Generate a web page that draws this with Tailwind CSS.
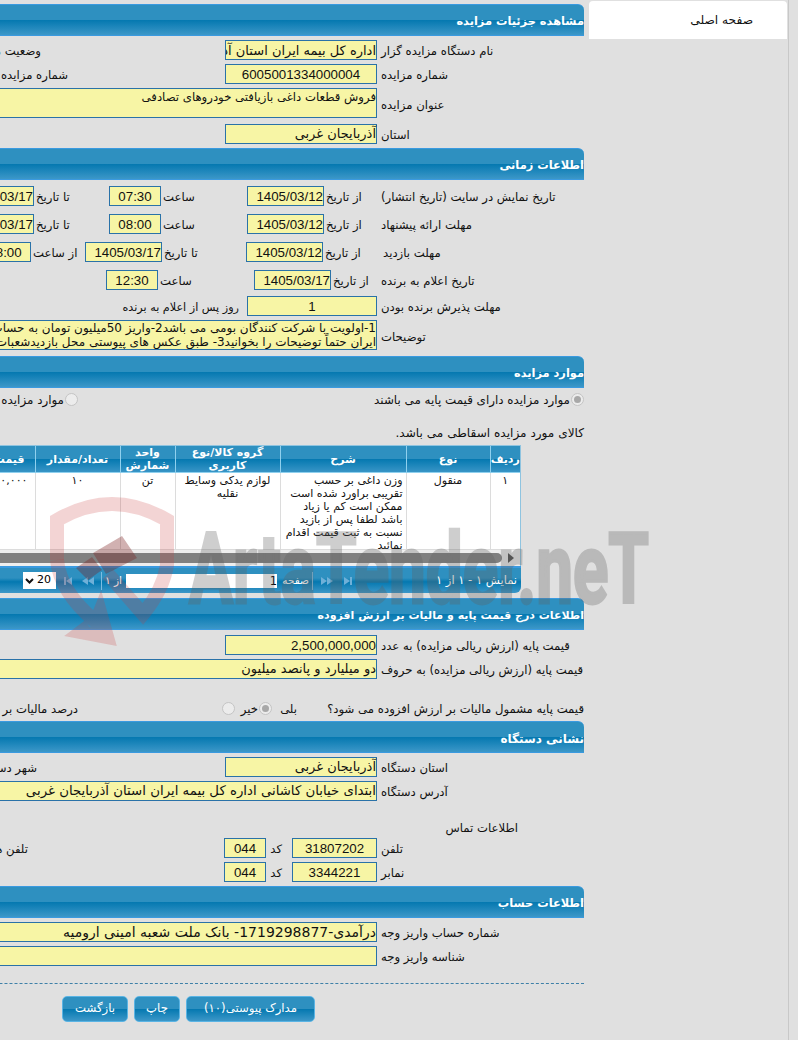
<!DOCTYPE html>
<html lang="fa" dir="rtl">
<head>
<meta charset="UTF-8">
<title>مشاهده جزئیات مزایده</title>
<script src="https://cdn.jsdelivr.net/npm/@tailwindcss/browser@4"></script>
</head>
<body class="relative h-[1040px] overflow-hidden bg-[#e0e0e0] text-[#111] text-[11.7px] font-['DejaVu_Sans',sans-serif]">

<div class="flex h-[1040px] mr-[9px] border-r border-[#c8c8c8] pr-px">
  <!-- Sidebar -->
  <aside class="w-[198px] flex-none pt-px">
    <div class="h-[38px] bg-white rounded-t-[4px] flex items-center pr-[34px] text-[12.2px]">صفحه اصلی</div>
  </aside>

  <!-- Main -->
  <main class="w-[760px] flex-none mr-[5px] pt-1">

    <h2 class="h-8 pt-1 flex items-center border-y border-[#3a9ae0] rounded-tr-[6px] bg-[linear-gradient(to_bottom,#2e90c0_0%,#2e90c0_50%,#0478b0_50%,#3c97c8_100%)] text-white font-bold text-[11.4px]">مشاهده جزئیات مزایده</h2>
    <div class="flex items-center h-5 mt-1">
      <div class="w-[207px] flex-none text-left pl-1 pt-1">نام دستگاه مزایده گزار</div>
      <div class="w-[152px] h-5 flex-none border border-[#2a72a8] bg-[#f7f5a5] text-[13px] leading-[20px] overflow-hidden whitespace-nowrap">اداره کل بیمه ایران استان آذربایجان غربی</div>
      <div class="pr-[184px] pt-1 whitespace-nowrap">وضعیت مزایده</div>
    </div>
    <div class="flex items-center h-5 mt-1">
      <div class="w-[207px] flex-none text-left pl-1 pt-1">شماره مزایده</div>
      <div dir="ltr" class="w-[152px] h-5 flex-none border border-[#2a72a8] bg-[#f7f5a5] font-['Liberation_Sans',sans-serif] text-[13.3px] leading-[20px] text-center">6005001334000004</div>
      <div class="pr-[157px] pt-1 whitespace-nowrap">شماره مزایده</div>
    </div>
    <div class="flex items-center h-[30px] mt-1">
      <div class="w-[207px] flex-none text-left pl-1 pt-[6px]">عنوان مزایده</div>
      <div class="flex-1 h-[30px] border border-[#2a72a8] bg-[#f7f5a5] leading-[16px] whitespace-nowrap">فروش قطعات داغی بازیافتی خودروهای تصادفی</div>
    </div>
    <div class="flex items-center h-5 mt-[6px]">
      <div class="w-[207px] flex-none text-left pl-1 pt-1">استان</div>
      <div class="w-[152px] h-5 flex-none border border-[#2a72a8] bg-[#f7f5a5] text-[13px] leading-[18px] whitespace-nowrap">آذربایجان غربی</div>
    </div>

    <h2 class="h-8 pt-1 mt-1 flex items-center border-y border-[#3a9ae0] rounded-tr-[6px] bg-[linear-gradient(to_bottom,#2e90c0_0%,#2e90c0_50%,#0478b0_50%,#3c97c8_100%)] text-white font-bold text-[11.4px]">اطلاعات زمانی</h2>
    <div class="flex items-center h-5 mt-[6px]">
      <div class="w-[207px] flex-none text-left pl-1 pt-1 whitespace-nowrap">تاریخ نمایش در سایت (تاریخ انتشار)</div>
      <div class="w-[53px] flex-none text-left pl-[2px] pt-1 whitespace-nowrap">از تاریخ</div>
      <div dir="ltr" class="w-[77px] h-5 flex-none border border-[#2a72a8] bg-[#f7f5a5] font-['Liberation_Sans',sans-serif] text-[13.3px] leading-[20px] text-right">1405/03/12</div>
      <div class="w-[86px] flex-none text-left pl-[2px] pt-1">ساعت</div>
      <div dir="ltr" class="w-[52px] h-5 flex-none border border-[#2a72a8] bg-[#f7f5a5] font-['Liberation_Sans',sans-serif] text-[13.3px] leading-[20px] text-center">07:30</div>
      <div class="w-[75px] flex-none text-left pl-[2px] pt-1 whitespace-nowrap">تا تاریخ</div>
      <div dir="ltr" class="w-[77px] h-5 flex-none border border-[#2a72a8] bg-[#f7f5a5] font-['Liberation_Sans',sans-serif] text-[13.3px] leading-[20px] text-right">1405/03/17</div>
    </div>
    <div class="flex items-center h-5 mt-2">
      <div class="w-[207px] flex-none text-left pl-1 pt-1 whitespace-nowrap">مهلت ارائه پیشنهاد</div>
      <div class="w-[53px] flex-none text-left pl-[2px] pt-1 whitespace-nowrap">از تاریخ</div>
      <div dir="ltr" class="w-[77px] h-5 flex-none border border-[#2a72a8] bg-[#f7f5a5] font-['Liberation_Sans',sans-serif] text-[13.3px] leading-[20px] text-right">1405/03/12</div>
      <div class="w-[86px] flex-none text-left pl-[2px] pt-1">ساعت</div>
      <div dir="ltr" class="w-[52px] h-5 flex-none border border-[#2a72a8] bg-[#f7f5a5] font-['Liberation_Sans',sans-serif] text-[13.3px] leading-[20px] text-center">08:00</div>
      <div class="w-[75px] flex-none text-left pl-[2px] pt-1 whitespace-nowrap">تا تاریخ</div>
      <div dir="ltr" class="w-[77px] h-5 flex-none border border-[#2a72a8] bg-[#f7f5a5] font-['Liberation_Sans',sans-serif] text-[13.3px] leading-[20px] text-right">1405/03/17</div>
    </div>
    <div class="flex items-center h-5 mt-2">
      <div class="w-[207px] flex-none text-left pl-[6px] pt-1 whitespace-nowrap">مهلت بازدید</div>
      <div class="w-[54px] flex-none text-left pl-[2px] pt-1 whitespace-nowrap">از تاریخ</div>
      <div dir="ltr" class="w-[77px] h-5 flex-none border border-[#2a72a8] bg-[#f7f5a5] font-['Liberation_Sans',sans-serif] text-[13.3px] leading-[20px] text-right">1405/03/12</div>
      <div class="w-[84px] flex-none text-left pl-[2px] pt-1 whitespace-nowrap">تا تاریخ</div>
      <div dir="ltr" class="w-[77px] h-5 flex-none border border-[#2a72a8] bg-[#f7f5a5] font-['Liberation_Sans',sans-serif] text-[13.3px] leading-[20px] text-right">1405/03/17</div>
      <div class="w-[54px] flex-none text-left pl-[2px] pt-1 whitespace-nowrap">از ساعت</div>
      <div dir="ltr" class="w-[52px] h-5 flex-none border border-[#2a72a8] bg-[#f7f5a5] font-['Liberation_Sans',sans-serif] text-[13.3px] leading-[20px] text-center">18:00</div>
    </div>
    <div class="flex items-center h-5 mt-2">
      <div class="w-[207px] flex-none text-left pl-1 pt-1 whitespace-nowrap">تاریخ اعلام به برنده</div>
      <div class="w-[46px] flex-none text-left pl-[2px] pt-1 whitespace-nowrap">از تاریخ</div>
      <div dir="ltr" class="w-[77px] h-5 flex-none border border-[#2a72a8] bg-[#f7f5a5] font-['Liberation_Sans',sans-serif] text-[13.3px] leading-[20px] text-right">1405/03/17</div>
      <div class="w-[96px] flex-none text-left pl-[2px] pt-1">ساعت</div>
      <div dir="ltr" class="w-[52px] h-5 flex-none border border-[#2a72a8] bg-[#f7f5a5] font-['Liberation_Sans',sans-serif] text-[13.3px] leading-[20px] text-center">12:30</div>
    </div>
    <div class="flex items-center h-5 mt-[6px]">
      <div class="w-[207px] flex-none text-left pl-1 pt-1 whitespace-nowrap">مهلت پذیرش برنده بودن</div>
      <div dir="ltr" class="w-[130px] h-5 flex-none border border-[#2a72a8] bg-[#f7f5a5] font-['Liberation_Sans',sans-serif] text-[13.3px] leading-[20px] text-center">1</div>
      <div class="pr-2 pt-1 text-[11.2px] whitespace-nowrap">روز پس از اعلام به برنده</div>
    </div>
    <div class="flex items-center h-[30px] mt-1">
      <div class="w-[207px] flex-none text-left pl-1 pt-[6px]">توضیحات</div>
      <div class="flex-1 h-[30px] border border-[#2a72a8] bg-[#f7f5a5] text-[12px] leading-[14px] overflow-hidden whitespace-nowrap">
        <div>1-اولویت با شرکت کنندگان بومی می باشد2-واریز 50میلیون تومان به حساب درآمدی بیمه</div>
        <div>ایران حتماً توضیحات را بخوانید3- طبق عکس های پیوستی محل بازدیدشعبات بیمه ایران</div>
      </div>
    </div>

    <h2 class="h-8 pt-1 mt-[6px] flex items-center border-y border-[#3a9ae0] rounded-tr-[6px] bg-[linear-gradient(to_bottom,#2e90c0_0%,#2e90c0_50%,#0478b0_50%,#3c97c8_100%)] text-white font-bold text-[11.4px]">موارد مزایده</h2>
    <div class="flex items-center h-[13px] mt-[5px]">
      <span class="w-[13px] h-[13px] flex-none rounded-full border border-[#c4c4c4] bg-[#ececec] flex items-center justify-center"><span class="w-[7px] h-[7px] rounded-full bg-[#a8a8a8]"></span></span>
      <span class="w-[296px] flex-none pr-px pt-[2px] text-[11.9px] whitespace-nowrap">موارد مزایده دارای قیمت پایه می باشند</span>
      <span class="w-[13px] h-[13px] flex-none rounded-full border border-[#c4c4c4] bg-[#ececec] mr-[197px]"></span>
      <span class="pr-px pt-[2px] text-[11.9px] whitespace-nowrap">موارد مزایده فاقد قیمت پایه می باشند</span>
    </div>
    <p class="mt-[18px] h-[18px] leading-[18px] text-[12.1px] whitespace-nowrap">کالای مورد مزایده اسقاطی می باشد.</p>

    <!-- Items grid -->
    <div class="mr-[63px] mt-[3px] bg-white border-t border-[#8fc4e0] border-r w-[560px]">
      <table class="table-fixed border-collapse w-[559px] text-center">
        <thead>
          <tr class="h-[26px] bg-[linear-gradient(to_bottom,#2e90c0_0%,#2e90c0_48%,#0478b0_48%,#3c97c8_100%)] text-white font-bold text-[11px] leading-[13px]">
            <th class="w-[30px] font-bold border-l border-[#8fd0ee] p-0">ردیف</th>
            <th class="w-[84px] font-bold border-l border-[#8fd0ee] p-0">نوع</th>
            <th class="w-[126px] font-bold border-l border-[#8fd0ee] p-0">شرح</th>
            <th class="w-[105px] font-bold border-l border-[#8fd0ee] p-0">گروه کالا/نوع کاربری</th>
            <th class="w-[55px] font-bold border-l border-[#8fd0ee] p-0">واحد شمارش</th>
            <th class="w-[85px] font-bold border-l border-[#8fd0ee] p-0">تعداد/مقدار</th>
            <th class="font-bold p-0">قیمت پایه</th>
          </tr>
        </thead>
        <tbody class="text-[11px] leading-[13px]">
          <tr class="align-top border-t border-[#8fd0ee] border-b border-b-[#dcdcdc]">
            <td class="border-l border-[#dcdcdc] p-0"><div class="h-[76px] pt-px">۱</div></td>
            <td class="border-l border-[#dcdcdc] p-0"><div class="h-[76px] pt-px">منقول</div></td>
            <td class="border-l border-[#dcdcdc] p-0"><div class="h-[76px] pt-px pr-[3px] text-right overflow-hidden">وزن داغی بر حسب تقریبی براورد شده است ممکن است کم یا زیاد باشد لطفا پس از بازید نسبت به ثبت قیمت اقدام نمائید</div></td>
            <td class="border-l border-[#dcdcdc] p-0"><div class="h-[76px] pt-px">لوازم یدکی وسایط نقلیه</div></td>
            <td class="border-l border-[#dcdcdc] p-0"><div class="h-[76px] pt-px">تن</div></td>
            <td class="border-l border-[#dcdcdc] p-0"><div class="h-[76px] pt-px">۱۰</div></td>
            <td class="p-0"><div class="h-[76px] pt-px pr-[7px] text-right">۵۰۰,۰۰۰</div></td>
          </tr>
        </tbody>
      </table>
      <!-- Scroll strip -->
      <div class="h-4 bg-[#eeeeee] flex items-center">
        <span class="w-[18px] flex-none flex justify-center">
          <svg width="6" height="10" viewBox="0 0 6 10"><path d="M0 0L6 5L0 10Z" fill="#505050"/></svg>
        </span>
        <span class="h-[10px] w-[541px] flex-none bg-[#808080] rounded-r-full"></span>
      </div>
    </div>
    <div class="mr-[63px] w-[560px] h-[27px] flex items-center border-t-2 border-[#3a9ae0] rounded-br-[6px] bg-[linear-gradient(to_bottom,#2e90c0_0%,#2e90c0_40%,#0478b0_55%,#3c97c8_100%)] text-white text-[11.5px] whitespace-nowrap">
      <span class="pr-[4px] w-[169px] flex-none">نمایش ۱ - ۱ از ۱</span>
      <svg class="flex-none" width="10" height="8" viewBox="0 0 10 8"><path d="M2 0L8 4L2 8ZM8 0H10V8H8Z" fill="#6fb0d8"/></svg>
      <svg class="flex-none mr-[9px]" width="12" height="8" viewBox="0 0 12 8"><path d="M0 0L6 4L0 8ZM6 0L12 4L6 8Z" fill="#6fb0d8"/></svg>
      <span class="w-px h-[18px] bg-[#7dbde0] flex-none mr-[8px]"></span>
      <span class="mr-[3px] w-[27px] flex-none text-[10.5px]">صفحه</span>
      <div dir="ltr" class="w-[151px] h-[14px] flex-none mr-[5px] bg-white text-black leading-[14px] text-right">1</div>
      <span class="mr-[4px] flex-none w-[15px] text-[10.5px]">از ۱</span>
      <span class="w-px h-[18px] bg-[#7dbde0] flex-none mr-[5px]"></span>
      <svg class="flex-none mr-[7px]" width="12" height="8" viewBox="0 0 12 8"><path d="M12 0L6 4L12 8ZM6 0L0 4L6 8Z" fill="#6fb0d8"/></svg>
      <svg class="flex-none mr-[8px]" width="10" height="8" viewBox="0 0 10 8"><path d="M8 0L2 4L8 8ZM2 0H0V8H2Z" fill="#6fb0d8"/></svg>
      <div dir="ltr" class="w-[33px] h-[17px] flex-none mr-[8px] bg-white text-black flex items-center justify-between pl-[2px] pr-[5px] text-[11px]">
        <svg width="9" height="6" viewBox="0 0 9 6"><path d="M1 1L4.5 4.5L8 1" fill="none" stroke="#111" stroke-width="2"/></svg>
        <span>20</span>
      </div>
    </div>

    <h2 class="h-8 pt-1 mt-[5px] flex items-center border-y border-[#3a9ae0] rounded-tr-[6px] bg-[linear-gradient(to_bottom,#2e90c0_0%,#2e90c0_50%,#0478b0_50%,#3c97c8_100%)] text-white font-bold text-[11px]">اطلاعات درج قیمت پایه و مالیات بر ارزش افزوده</h2>
    <div class="flex items-center h-5 mt-[5px]">
      <div class="w-[207px] flex-none text-left pl-1 pt-1 whitespace-nowrap">قیمت پایه (ارزش ریالی مزایده) به عدد</div>
      <div dir="ltr" class="w-[152px] h-5 flex-none border border-[#2a72a8] bg-[#f7f5a5] font-['Liberation_Sans',sans-serif] text-[13.3px] leading-[20px] text-right">2,500,000,000</div>
    </div>
    <div class="flex items-center h-5 mt-1">
      <div class="w-[207px] flex-none text-left pl-1 pt-1 whitespace-nowrap">قیمت پایه (ارزش ریالی مزایده) به حروف</div>
      <div class="flex-1 h-5 border border-[#2a72a8] bg-[#f7f5a5] text-[13px] leading-[18px] whitespace-nowrap">دو میلیارد و پانصد میلیون</div>
    </div>
    <div class="flex items-center h-[13px] mt-[23px] whitespace-nowrap">
      <span class="w-[287px] flex-none pt-[2px]">قیمت پایه مشمول مالیات بر ارزش افزوده می شود؟</span>
      <span class="w-[25px] flex-none pt-[2px]">بلی</span>
      <span class="w-[13px] h-[13px] flex-none rounded-full border border-[#c4c4c4] bg-[#ececec] flex items-center justify-center"><span class="w-[7px] h-[7px] rounded-full bg-[#a8a8a8]"></span></span>
      <span class="w-[24px] flex-none pr-px pt-[2px]">خیر</span>
      <span class="w-[13px] h-[13px] flex-none rounded-full border border-[#c4c4c4] bg-[#ececec]"></span>
      <span class="pr-[144px] pt-[2px]">درصد مالیات بر ارزش افزوده</span>
    </div>

    <h2 class="h-8 pt-1 mt-[6px] flex items-center border-y border-[#3a9ae0] rounded-tr-[6px] bg-[linear-gradient(to_bottom,#2e90c0_0%,#2e90c0_50%,#0478b0_50%,#3c97c8_100%)] text-white font-bold text-[12px]">نشانی دستگاه</h2>
    <div class="flex items-center h-5 mt-[4px]">
      <div class="w-[207px] flex-none text-left pl-1 pt-1">استان دستگاه</div>
      <div class="w-[152px] h-5 flex-none border border-[#2a72a8] bg-[#f7f5a5] text-[13px] leading-[18px] whitespace-nowrap">آذربایجان غربی</div>
      <div class="pr-[188px] pt-1 whitespace-nowrap">شهر دستگاه</div>
    </div>
    <div class="flex items-center h-5 mt-1">
      <div class="w-[207px] flex-none text-left pl-1 pt-1">آدرس دستگاه</div>
      <div class="flex-1 h-5 border border-[#2a72a8] bg-[#f7f5a5] text-[13.3px] leading-[18px] whitespace-nowrap">ابتدای خیابان کاشانی اداره کل بیمه ایران استان آذربایجان غربی</div>
    </div>
    <p class="mt-[19px] h-4 leading-4 pr-[66px]">اطلاعات تماس</p>
    <div class="flex items-center h-5 mt-[2px]">
      <div class="w-[207px] flex-none text-left pl-1 pt-1">تلفن</div>
      <div dir="ltr" class="w-[85px] h-5 flex-none border border-[#2a72a8] bg-[#f7f5a5] font-['Liberation_Sans',sans-serif] text-[13.3px] leading-[20px] text-center">31807202</div>
      <div class="w-[26px] flex-none pr-[10px] pt-1">کد</div>
      <div dir="ltr" class="w-[42px] h-5 flex-none border border-[#2a72a8] bg-[#f7f5a5] font-['Liberation_Sans',sans-serif] text-[13.3px] leading-[20px] text-center">044</div>
      <div class="pr-[196px] pt-1 whitespace-nowrap">تلفن همراه</div>
    </div>
    <div class="flex items-center h-5 mt-1">
      <div class="w-[207px] flex-none text-left pl-1 pt-1">نمابر</div>
      <div dir="ltr" class="w-[85px] h-5 flex-none border border-[#2a72a8] bg-[#f7f5a5] font-['Liberation_Sans',sans-serif] text-[13.3px] leading-[20px] text-center">3344221</div>
      <div class="w-[26px] flex-none pr-[10px] pt-1">کد</div>
      <div dir="ltr" class="w-[42px] h-5 flex-none border border-[#2a72a8] bg-[#f7f5a5] font-['Liberation_Sans',sans-serif] text-[13.3px] leading-[20px] text-center">044</div>
    </div>

    <h2 class="h-8 pt-1 mt-1 flex items-center border-y border-[#3a9ae0] rounded-tr-[6px] bg-[linear-gradient(to_bottom,#2e90c0_0%,#2e90c0_50%,#0478b0_50%,#3c97c8_100%)] text-white font-bold text-[11.4px]">اطلاعات حساب</h2>
    <div class="flex items-center h-5 mt-1">
      <div class="w-[207px] flex-none text-left pl-1 pt-1 whitespace-nowrap">شماره حساب واریز وجه</div>
      <div class="flex-1 h-5 border border-[#2a72a8] bg-[#f7f5a5] text-[14px] leading-[18px] whitespace-nowrap">درآمدی-1719298877- بانک ملت شعبه امینی ارومیه</div>
    </div>
    <div class="flex items-center h-5 mt-1">
      <div class="w-[207px] flex-none text-left pl-1 pt-1 whitespace-nowrap">شناسه واریز وجه</div>
      <div class="flex-1 h-5 border border-[#2a72a8] bg-[#f7f5a5]"></div>
    </div>
    <div class="mt-[17px] border-t border-dashed border-[#3f80a8]"></div>
    <div class="flex gap-[6px] mr-[269px] mt-[12px]">
      <button class="w-[129px] h-[26px] flex-none rounded-[5px] border border-[#5ab4e4] bg-[linear-gradient(to_bottom,#2e90c0_0%,#2e90c0_50%,#0478b0_50%,#3c97c8_100%)] text-white">مدارک پیوستی(۱۰)</button>
      <button class="w-[46px] h-[26px] flex-none rounded-[5px] border border-[#5ab4e4] bg-[linear-gradient(to_bottom,#2e90c0_0%,#2e90c0_50%,#0478b0_50%,#3c97c8_100%)] text-white">چاپ</button>
      <button class="w-[66px] h-[26px] flex-none rounded-[5px] border border-[#5ab4e4] bg-[linear-gradient(to_bottom,#2e90c0_0%,#2e90c0_50%,#0478b0_50%,#3c97c8_100%)] text-white">بازگشت</button>
    </div>
  </main>
</div>

<!-- Watermark laid over the page -->
<svg class="absolute left-0 top-0 pointer-events-none" width="798" height="1040" viewBox="0 0 798 1040">
  <path d="M57 560V520Q112 488 167 520V565Q163 590 143 614L108 574" fill="none" stroke="#c83c3c" stroke-opacity=".22" stroke-width="14"/>
  <path d="M57 560Q60 592 96 622L100 612L107 637L81 632L89 626" fill="none" stroke="#c83c3c" stroke-opacity=".22" stroke-width="14"/>
  <path d="M76 568L92 557L102 570L88 580ZM93 553L122 536L137 558L106 574Z" fill="#7a2020" opacity=".35"/>
  <g opacity=".3">
    <text x="189" y="603" font-family="Roboto, sans-serif" font-weight="700" font-size="98" textLength="460" lengthAdjust="spacingAndGlyphs" direction="ltr" fill="#606060" stroke="#606060" stroke-width="3">ArtaTender.neT</text>
  </g>
</svg>
</body>
</html>
